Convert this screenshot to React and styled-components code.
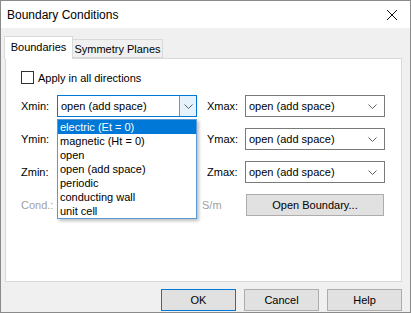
import React, { useState } from 'react'
import styled, { createGlobalStyle } from 'styled-components'

const GlobalStyle = createGlobalStyle`
  html, body {
    margin: 0;
    padding: 0;
    background: #ffffff;
  }
  body {
    font-family: "Liberation Sans", Arial, sans-serif;
    font-size: 11px;
    color: #000;
  }
`

const OPTIONS = [
  'electric (Et = 0)',
  'magnetic (Ht = 0)',
  'open',
  'open (add space)',
  'periodic',
  'conducting wall',
  'unit cell',
]

function Chevron() {
  return (
    <svg width="9" height="5" viewBox="0 0 9 5">
      <polyline points="0.5,0.5 4.5,4.5 8.5,0.5" fill="none" stroke="#606060" strokeWidth="1" />
    </svg>
  )
}

function Combo({ value, open, selected }) {
  return (
    <StCombo $open={open}>
      <StComboText>{value}</StComboText>
      <StArrow $open={open}><Chevron /></StArrow>
      {open && (
        <StList>
          {OPTIONS.map((o, i) => (
            <StItem key={o} $active={i === selected}>{o}</StItem>
          ))}
        </StList>
      )}
    </StCombo>
  )
}

function App() {
  const [tab] = useState(0)

  return (
    <>
      <GlobalStyle />
      <StWindow>
        <StTitleBar>
          <span>Boundary Conditions</span>
          <StClose>
            <svg width="12" height="12" viewBox="0 0 12 12">
              <path d="M1 1 L11 11 M11 1 L1 11" stroke="#111" strokeWidth="1" />
            </svg>
          </StClose>
        </StTitleBar>

        <StBody>
          <StTabStrip>
            <StTab $active={tab === 0} $w={69}>Boundaries</StTab>
            <StTab $active={tab === 1} $w={90}>Symmetry Planes</StTab>
          </StTabStrip>

          <StPanel>
            <StCheckRow>
              <StCheckBox />
              <span>Apply in all directions</span>
            </StCheckRow>

            <StGrid>
              <StLabel>Xmin:</StLabel>
              <Combo value="open (add space)" open selected={0} />
              <StLabel $pad={10}>Xmax:</StLabel>
              <Combo value="open (add space)" />

              <StLabel>Ymin:</StLabel>
              <Combo value="open (add space)" />
              <StLabel $pad={10}>Ymax:</StLabel>
              <Combo value="open (add space)" />

              <StLabel>Zmin:</StLabel>
              <Combo value="open (add space)" />
              <StLabel $pad={10}>Zmax:</StLabel>
              <Combo value="open (add space)" />

              <StLabel $disabled>Cond.:</StLabel>
              <StDisabledInput />
              <StLabel $pad={5} $disabled>S/m</StLabel>
              <StButton $w={138} $inset>Open Boundary...</StButton>
            </StGrid>
          </StPanel>

          <StFooter>
            <StButton $w={75} $default>OK</StButton>
            <StButton $w={75}>Cancel</StButton>
            <StButton $w={75}>Help</StButton>
          </StFooter>
        </StBody>
      </StWindow>
    </>
  )
}
export default App

const StWindow = styled.div`
  width: 411px;
  height: 313px;
  box-sizing: border-box;
  border: 1px solid #8a8a8a;
  background: #f0f0f0;
  display: flex;
  flex-direction: column;
`

const StTitleBar = styled.div`
  height: 27px;
  background: #ffffff;
  display: flex;
  align-items: center;
  justify-content: space-between;
  padding: 0 12px 0 6px;
  font-size: 12px;
`

const StClose = styled.div`
  width: 12px;
  height: 12px;
  display: flex;
`

const StBody = styled.div`
  flex: 1;
  display: flex;
  flex-direction: column;
  padding: 8px 8px 0 3px;
`

const StTabStrip = styled.div`
  display: flex;
  align-items: flex-end;
  height: 22px;
  position: relative;
  z-index: 2;
`

const StTab = styled.div`
  width: ${p => p.$w}px;
  box-sizing: border-box;
  height: ${p => (p.$active ? 23 : 19)}px;
  margin-bottom: ${p => (p.$active ? -1 : 0)}px;
  border: 1px solid #d9d9d9;
  border-bottom: ${p => (p.$active ? 'none' : '1px solid #d9d9d9')};
  border-left: ${p => (p.$active ? '1px solid #d9d9d9' : 'none')};
  background: ${p => (p.$active ? '#ffffff' : '#f0f0f0')};
  display: flex;
  align-items: center;
  justify-content: center;
  white-space: nowrap;
  padding-bottom: ${p => (p.$active ? 2 : 0)}px;
`

const StPanel = styled.div`
  margin-left: 1px;
  height: 224px;
  box-sizing: border-box;
  border: 1px solid #d9d9d9;
  background: #ffffff;
  padding: 12px 0 0 15px;
  display: flex;
  flex-direction: column;
  gap: 11px;
`

const StCheckRow = styled.div`
  display: flex;
  align-items: center;
  gap: 4px;
  height: 13px;
`

const StCheckBox = styled.div`
  width: 13px;
  height: 13px;
  box-sizing: border-box;
  border: 1px solid #333333;
  background: #ffffff;
`

const StGrid = styled.div`
  display: grid;
  grid-template-columns: 36px 140px 48px 140px;
  grid-auto-rows: 22px;
  row-gap: 11px;
  align-items: center;
`

const StLabel = styled.div`
  padding-left: ${p => p.$pad || 0}px;
  color: ${p => (p.$disabled ? '#a0a0a0' : '#000')};
`

const StCombo = styled.div`
  position: relative;
  height: 22px;
  box-sizing: border-box;
  border: 1px solid ${p => (p.$open ? '#0078d7' : '#7a7a7a')};
  background: #ffffff;
  display: flex;
  align-items: center;
`

const StComboText = styled.div`
  flex: 1;
  padding-left: 3px;
  white-space: nowrap;
`

const StArrow = styled.div`
  width: 17px;
  height: 100%;
  box-sizing: border-box;
  display: flex;
  align-items: center;
  justify-content: center;
  border-left: 1px solid ${p => (p.$open ? '#569de5' : 'transparent')};
  background: ${p => (p.$open ? '#e5f1fb' : 'transparent')};
  margin-right: ${p => (p.$open ? 0 : 4)}px;
`

const StList = styled.div`
  position: absolute;
  left: -1px;
  top: calc(100% + 3px);
  width: 140px;
  box-sizing: border-box;
  border: 1px solid #5a9ad8;
  background: #ffffff;
  box-shadow: 2px 2px 3px rgba(0, 0, 0, 0.25);
  z-index: 5;
`

const StItem = styled.div`
  height: 14px;
  line-height: 14px;
  padding-left: 2px;
  white-space: nowrap;
  background: ${p => (p.$active ? '#0078d7' : 'transparent')};
  color: ${p => (p.$active ? '#ffffff' : '#000')};
`

const StDisabledInput = styled.div`
  height: 22px;
  box-sizing: border-box;
  border: 1px solid #cccccc;
  background: #f0f0f0;
`

const StButton = styled.div`
  width: ${p => p.$w}px;
  height: 22px;
  box-sizing: border-box;
  border: 1px solid ${p => (p.$default ? '#0078d7' : '#adadad')};
  background: #e1e1e1;
  display: flex;
  align-items: center;
  justify-content: center;
  margin-left: ${p => (p.$inset ? 1 : 0)}px;
`

const StFooter = styled.div`
  display: flex;
  justify-content: flex-end;
  gap: 8px;
  padding-top: 7px;
`
